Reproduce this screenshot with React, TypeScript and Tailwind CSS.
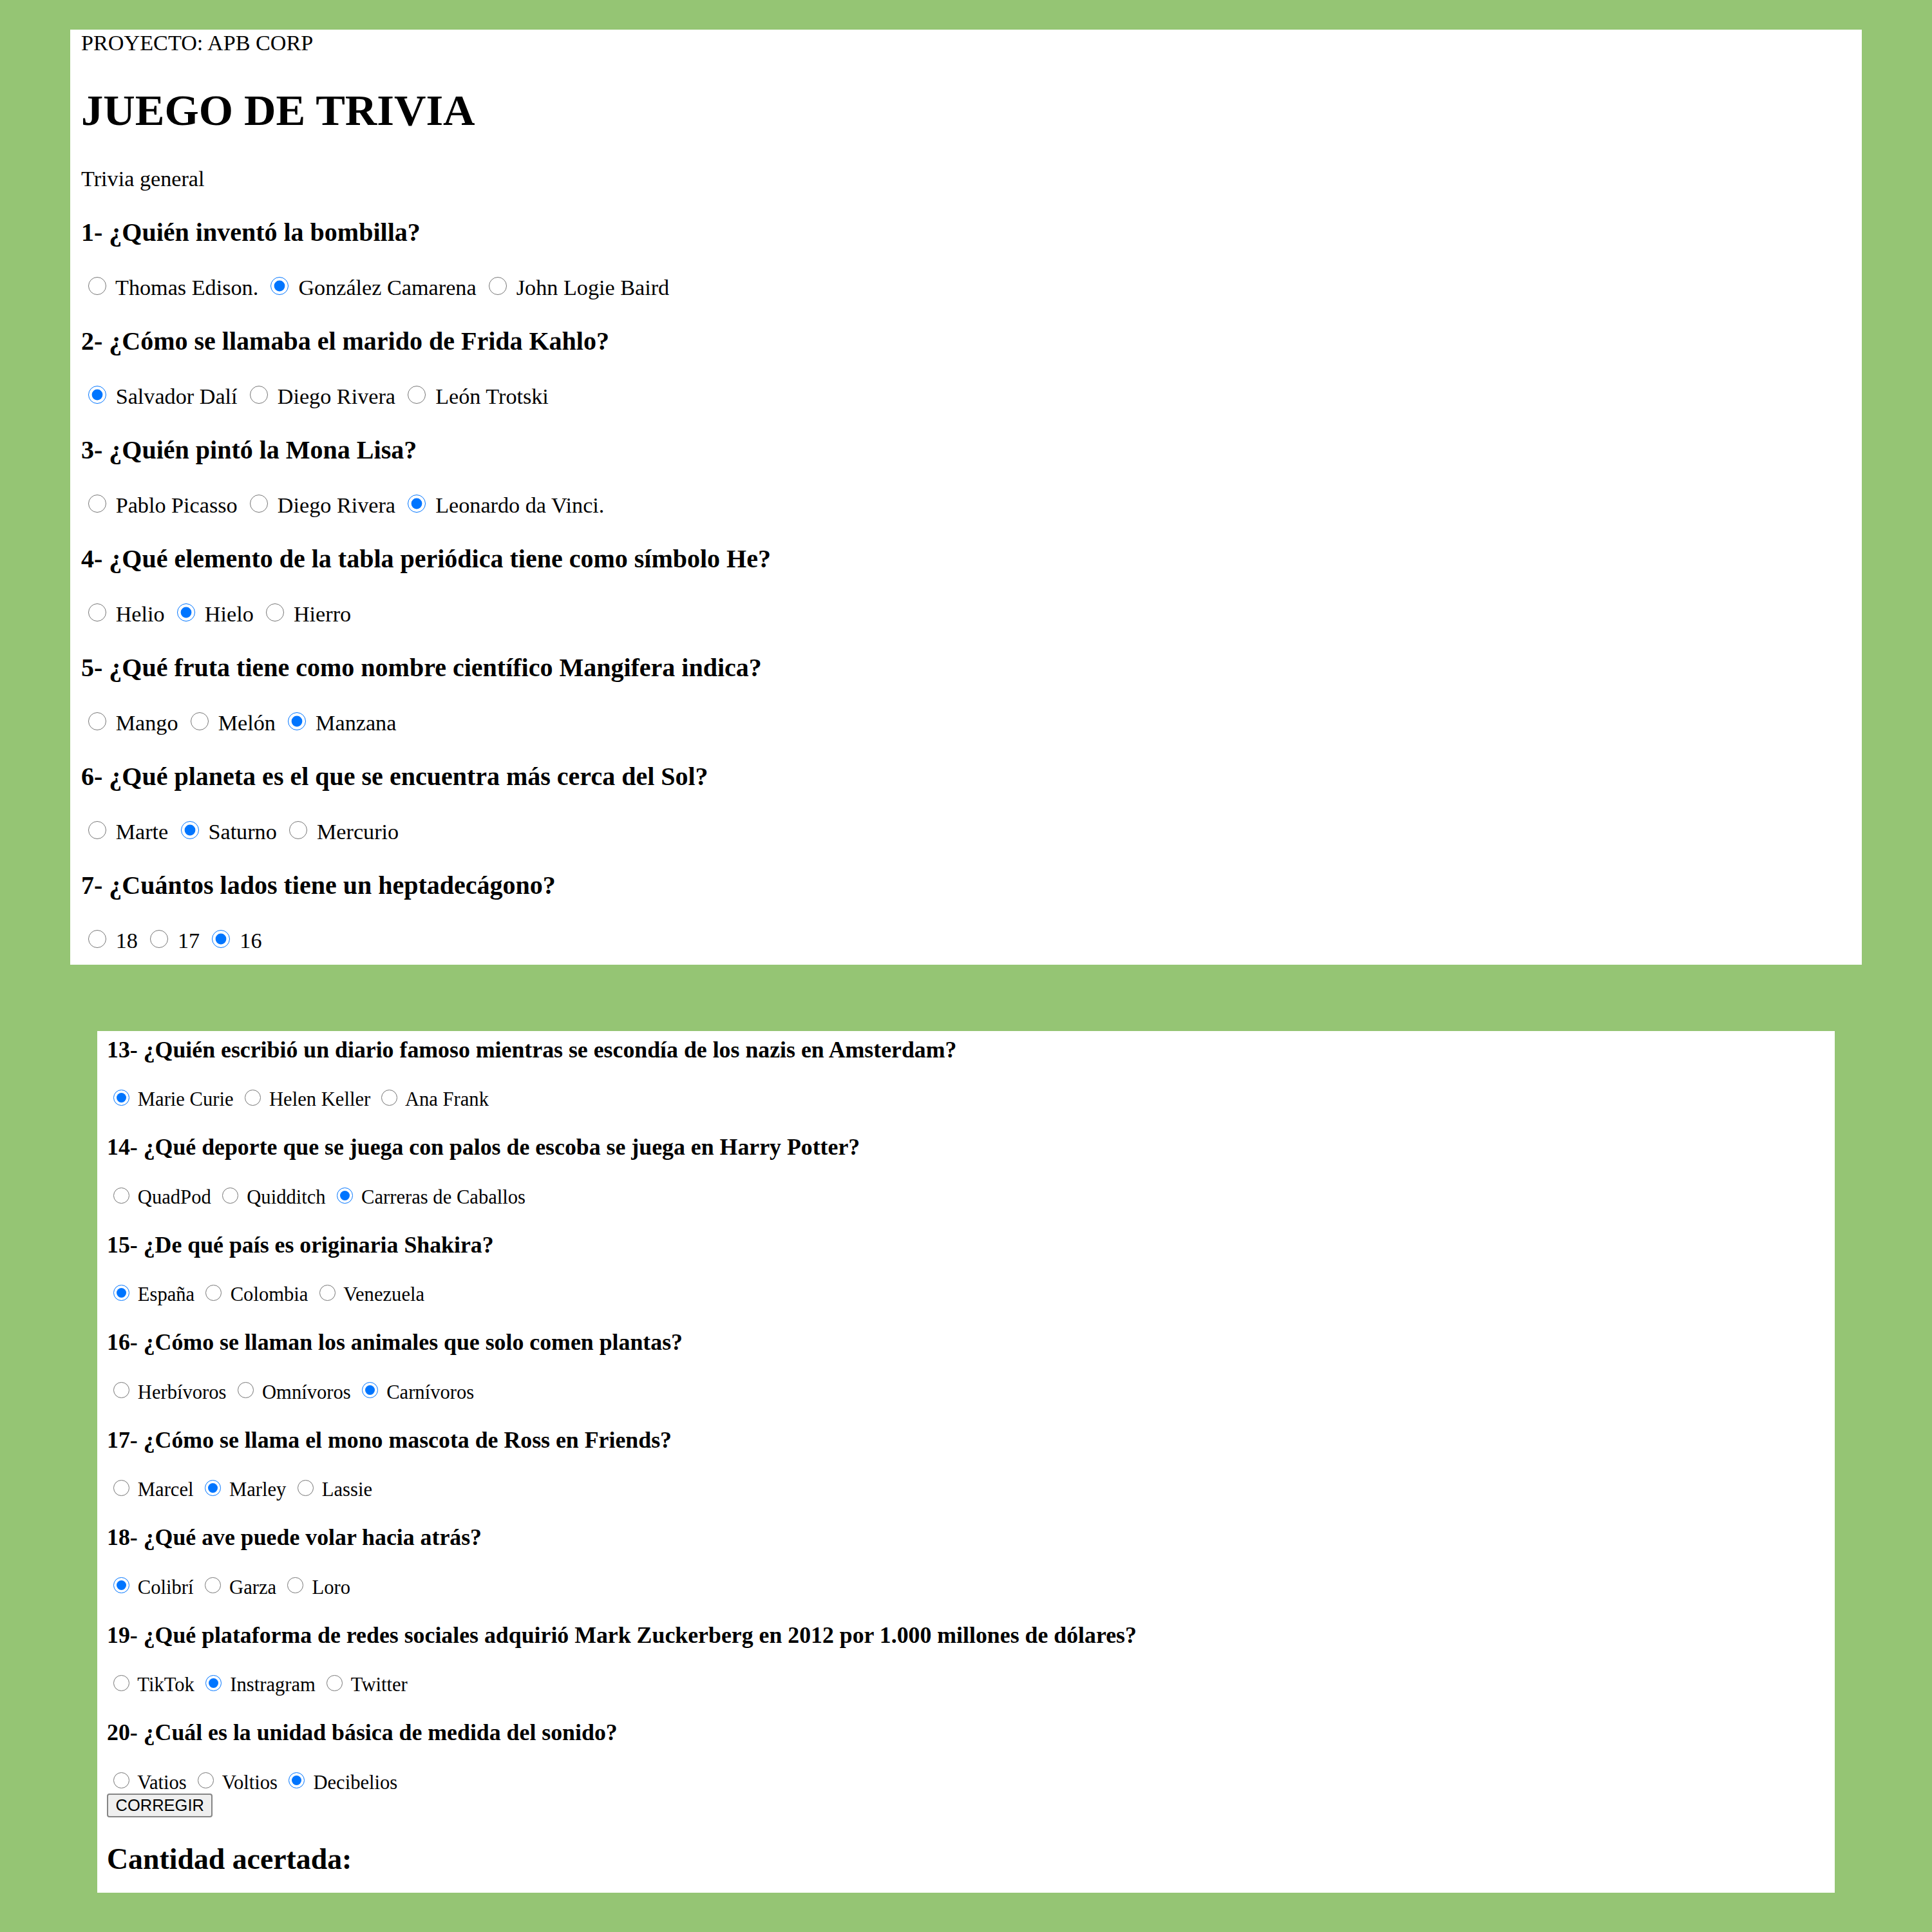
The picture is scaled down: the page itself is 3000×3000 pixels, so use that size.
import { Fragment } from "react"

type Opt = [string, boolean]
type Question = { n: number; text: string; opts: Opt[] }

const first: Question[] = [
  { n: 1, text: "¿Quién inventó la bombilla?", opts: [["Thomas Edison.", false], ["González Camarena", true], ["John Logie Baird", false]] },
  { n: 2, text: "¿Cómo se llamaba el marido de Frida Kahlo?", opts: [["Salvador Dalí", true], ["Diego Rivera", false], ["León Trotski", false]] },
  { n: 3, text: "¿Quién pintó la Mona Lisa?", opts: [["Pablo Picasso", false], ["Diego Rivera", false], ["Leonardo da Vinci.", true]] },
  { n: 4, text: "¿Qué elemento de la tabla periódica tiene como símbolo He?", opts: [["Helio", false], ["Hielo", true], ["Hierro", false]] },
  { n: 5, text: "¿Qué fruta tiene como nombre científico Mangifera indica?", opts: [["Mango", false], ["Melón", false], ["Manzana", true]] },
  { n: 6, text: "¿Qué planeta es el que se encuentra más cerca del Sol?", opts: [["Marte", false], ["Saturno", true], ["Mercurio", false]] },
  { n: 7, text: "¿Cuántos lados tiene un heptadecágono?", opts: [["18", false], ["17", false], ["16", true]] },
]

const second: Question[] = [
  { n: 13, text: "¿Quién escribió un diario famoso mientras se escondía de los nazis en Amsterdam?", opts: [["Marie Curie", true], ["Helen Keller", false], ["Ana Frank", false]] },
  { n: 14, text: "¿Qué deporte que se juega con palos de escoba se juega en Harry Potter?", opts: [["QuadPod", false], ["Quidditch", false], ["Carreras de Caballos", true]] },
  { n: 15, text: "¿De qué país es originaria Shakira?", opts: [["España", true], ["Colombia", false], ["Venezuela", false]] },
  { n: 16, text: "¿Cómo se llaman los animales que solo comen plantas?", opts: [["Herbívoros", false], ["Omnívoros", false], ["Carnívoros", true]] },
  { n: 17, text: "¿Cómo se llama el mono mascota de Ross en Friends?", opts: [["Marcel", false], ["Marley", true], ["Lassie", false]] },
  { n: 18, text: "¿Qué ave puede volar hacia atrás?", opts: [["Colibrí", true], ["Garza", false], ["Loro", false]] },
  { n: 19, text: "¿Qué plataforma de redes sociales adquirió Mark Zuckerberg en 2012 por 1.000 millones de dólares?", opts: [["TikTok", false], ["Instragram", true], ["Twitter", false]] },
  { n: 20, text: "¿Cuál es la unidad básica de medida del sonido?", opts: [["Vatios", false], ["Voltios", false], ["Decibelios", true]] },
]

// two screenshots at different zoom levels, so two size sets
const sizes = {
  large: {
    h3: "text-[40px] font-bold my-[39.8px]",
    radio: "w-[28px] h-[28px] mt-[6.4px] mr-[6.4px] ml-[10.7px] mb-0 align-baseline",
  },
  small: {
    h3: "text-[35.8px] font-bold my-[35.4px]",
    radio: "w-[25px] h-[25px] mt-[5.7px] mr-[5.7px] ml-[9.5px] mb-0 align-baseline",
  },
}

function Block({ q, size, flush }: { q: Question; size: "large" | "small"; flush?: boolean }) {
  const s = sizes[size]
  return (
    <>
      <h3 className={`${s.h3} ${flush ? "!mt-0" : ""}`}>
        {q.n}- {q.text}
      </h3>
      <div>
        {q.opts.map(([label, on], i) => (
          <Fragment key={i}>
            <input type="radio" name={`p${q.n}`} defaultChecked={on} className={s.radio} /> {label}{" "}
          </Fragment>
        ))}
      </div>
    </>
  )
}

export default function App() {
  return (
    <div className="w-[3000px] h-[3000px] bg-[#95c574] flex flex-col items-center pt-[46px] gap-[103px] font-['Liberation_Serif','Times_New_Roman',serif] text-black leading-[normal]">
      <div className="w-[2782px] h-[1452px] shrink-0 bg-white pl-[17px] pt-[2px] overflow-hidden text-[34.2px]">
        <div>PROYECTO: APB CORP</div>
        <h1 className="text-[68.5px] font-bold mt-[46px] mb-[48px]">JUEGO DE TRIVIA</h1>
        <p className="my-[34px]">Trivia general</p>
        {first.map((q) => (
          <Block key={q.n} q={q} size="large" />
        ))}
      </div>

      <div className="w-[2698px] h-[1338px] shrink-0 bg-white pl-[15px] pt-[8px] overflow-hidden text-[30.6px]">
        {second.map((q, i) => (
          <Block key={q.n} q={q} size="small" flush={i === 0} />
        ))}
        <div>
          <button className="bg-[#efefef] border-2 border-[#858585] rounded-[4px] px-[11.5px] py-[2px] text-[25.5px] leading-[normal] font-['Liberation_Sans',Arial,sans-serif] text-black">
            CORREGIR
          </button>
        </div>
        <h2 className="text-[45.8px] font-bold my-[38px]">Cantidad acertada:</h2>
      </div>
    </div>
  )
}
